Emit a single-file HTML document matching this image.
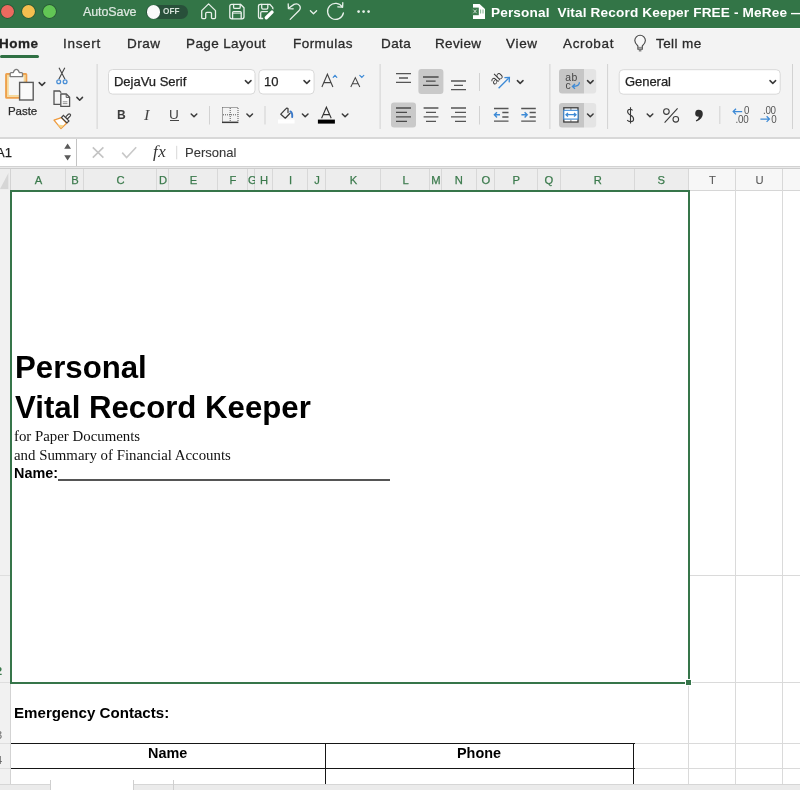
<!DOCTYPE html>
<html><head><meta charset="utf-8">
<style>
*{box-sizing:border-box;margin:0;padding:0}
html,body{width:800px;height:790px;overflow:hidden;background:#fff;font-family:"Liberation Sans",sans-serif;position:relative}
.a{position:absolute}
.t{position:absolute;white-space:pre;line-height:1;will-change:transform}
#title{left:0;top:0;width:800px;height:28px;background:#337547}
#tabs{left:0;top:28px;width:800px;height:109px;background:#f3f3f3;border-top:1px solid #fafafa}
.tab{will-change:transform;position:absolute;top:36.7px;font-size:13.5px;color:#2b2b2b;white-space:pre;line-height:1;-webkit-text-stroke:0.3px #2b2b2b}
.dd{position:absolute;background:#fff;border:1px solid #d6d6d6;border-radius:4px}
.chev{position:absolute;width:6px;height:6px;border-right:1.6px solid #444;border-bottom:1.6px solid #444;transform:rotate(45deg)}
.vdiv{position:absolute;width:1px;background:#d4d4d4}
.colh{will-change:transform;position:absolute;top:170px;height:21px;font-size:11.2px;color:#3b7a4c;text-align:center;line-height:21px;-webkit-text-stroke:0.25px;overflow:hidden}
</style></head><body>
<!-- TITLE BAR -->
<div class="a" id="title"></div>
<div class="a" style="left:0.9px;top:4.9px;width:13px;height:13px;border-radius:50%;background:#ec6a5f;box-shadow:0 0 0 0.7px rgba(20,40,25,0.45)"></div>
<div class="a" style="left:21.8px;top:4.9px;width:13px;height:13px;border-radius:50%;background:#f4bf4f;box-shadow:0 0 0 0.7px rgba(20,40,25,0.45)"></div>
<div class="a" style="left:42.7px;top:4.9px;width:13px;height:13px;border-radius:50%;background:#62c655;box-shadow:0 0 0 0.7px rgba(20,40,25,0.45)"></div>
<div class="t" style="left:83px;top:5.5px;font-size:12.5px;color:#dfe9e2;letter-spacing:-0.1px;-webkit-text-stroke:0.2px #dfe9e2">AutoSave</div>
<div class="a" style="left:146px;top:4.5px;width:42px;height:14.5px;border-radius:8px;background:#28503a"></div>
<div class="a" style="left:146.5px;top:5px;width:13.5px;height:13.5px;border-radius:50%;background:#fafafa"></div>
<div class="t" style="left:163px;top:8.3px;font-size:8.2px;font-weight:bold;color:#d6e2da;letter-spacing:0.1px">OFF</div>

<div class="t" style="left:491px;top:6px;font-size:13.6px;font-weight:bold;color:#fff;letter-spacing:0.15px">Personal  Vital Record Keeper FREE - MeRee —</div>

<!-- TABS / RIBBON -->
<div class="a" id="tabs"></div>
<div class="tab" style="left:-1px;font-weight:bold;color:#222;letter-spacing:0.5px">Home</div>
<div class="a" style="left:0;top:54.7px;width:38.7px;height:3px;border-radius:2px;background:#2f7043"></div>
<div class="tab" style="left:62.5px;letter-spacing:0.7px">Insert</div>
<div class="tab" style="left:127px;letter-spacing:0.5px">Draw</div>
<div class="tab" style="left:186.2px;letter-spacing:0.38px">Page Layout</div>
<div class="tab" style="left:293.2px;letter-spacing:0.45px">Formulas</div>
<div class="tab" style="left:380.5px;letter-spacing:0.4px">Data</div>
<div class="tab" style="left:434.5px;letter-spacing:0.35px">Review</div>
<div class="tab" style="left:506px;letter-spacing:0.7px">View</div>
<div class="tab" style="left:563.2px;letter-spacing:0.65px">Acrobat</div>
<div class="tab" style="left:656px;letter-spacing:0.4px">Tell me</div>

<!-- ribbon bottom line -->
<div class="a" style="left:0;top:136.8px;width:800px;height:2.2px;background:#d8d8d8"></div>

<!-- FORMULA BAR -->
<div class="a" style="left:0;top:139px;width:800px;height:26.5px;background:#fff"></div>
<div class="a" style="left:75.6px;top:139px;width:1.7px;height:26.5px;background:#c4c4c4"></div>
<div class="t" style="left:-4.5px;top:145.6px;font-size:13px;color:#222;-webkit-text-stroke:0.25px #222">A1</div>
<div class="t" style="left:184.6px;top:145.8px;font-size:13px;color:#363636;letter-spacing:0px;-webkit-text-stroke:0.1px #363636">Personal</div>
<div class="a" style="left:0;top:165.5px;width:800px;height:1.5px;background:#d2d2d2"></div>
<div class="a" style="left:0;top:167px;width:800px;height:0.9px;background:#eaeaea"></div>
<div class="a" style="left:0;top:167.9px;width:800px;height:1.2px;background:#cdcdcd"></div>

<svg class="a" style="left:0;top:0;will-change:transform" width="800" height="790" viewBox="0 0 800 790">
<g fill="none" stroke="#e9f1eb" stroke-width="1.3" stroke-linejoin="round" stroke-linecap="round">
 <!-- home -->
 <path d="M201.7,10.6 L208.6,3.9 L215.5,10.6 L215.5,17.6 Q215.5,18.6 214.5,18.6 L212.3,18.6 Q211.5,18.6 211.5,17.8 L211.5,13.6 Q211.5,12.4 210.3,12.4 L206.9,12.4 Q205.7,12.4 205.7,13.6 L205.7,17.8 Q205.7,18.6 204.9,18.6 L202.7,18.6 Q201.7,18.6 201.7,17.6 Z"/>
 <!-- save -->
 <path d="M231.8,4.3 L240.5,4.3 L244,7.8 L244,16.8 Q244,18.8 242,18.8 L231.8,18.8 Q229.8,18.8 229.8,16.8 L229.8,6.3 Q229.8,4.3 231.8,4.3 Z"/>
 <path d="M233.6,4.5 L233.6,7.2 Q233.6,8.4 234.8,8.4 L239,8.4 Q240.2,8.4 240.2,7.2 L240.2,4.5"/>
 <path d="M232.6,18.6 L232.6,12.6 Q232.6,11.6 233.6,11.6 L240.2,11.6 Q241.2,11.6 241.2,12.6 L241.2,18.6"/>
 <path d="M232.8,13.2 L241,13.2" stroke-width="0.9"/>
 <!-- save as -->
 <path d="M263,18.5 L260.4,18.5 Q258.5,18.5 258.5,16.6 L258.5,6.2 Q258.5,4.3 260.4,4.3 L269.8,4.3 L272.8,7.6 L272.8,9.4"/>
 <path d="M261.7,4.5 L261.7,7.8 Q261.7,9.1 263,9.1 L266.5,9.1 Q267.8,9.1 267.8,7.8 L267.8,4.5"/>
 <path d="M260.7,18.3 L260.7,12.9 Q260.7,11.7 261.9,11.7 L267.4,11.7"/>
 <!-- undo -->
 <path d="M290.2,19.4 L298.6,11 Q301.4,8.2 299.6,5.6 Q297.4,3 294,4.4 L288.6,8.2"/>
 <path d="M288.2,3.8 L288.4,8.6 L293.2,8.8"/>
 <path d="M310.4,10.8 L313.5,13.8 L316.6,10.8"/>
 <!-- redo -->
 <path d="M342.4,7.2 A8,8 0 1 0 343.4,13"/>
 <path d="M337.8,6.8 L342.6,7.2 L342.8,2.6"/>
</g>
<g fill="#e9f1eb"><circle cx="358.6" cy="11.6" r="1.35"/><circle cx="363.6" cy="11.6" r="1.35"/><circle cx="368.6" cy="11.6" r="1.35"/></g>
<!-- save-as pencil -->
<path d="M266.3,17.8 L272,12.1" stroke="#337547" stroke-width="6" stroke-linecap="round"/>
<path d="M266.3,17.8 L272,12.1" stroke="#fff" stroke-width="3.4" stroke-linecap="round"/>
<!-- file icon -->
<path d="M473,3.9 L479.6,3.9 L485,8.9 L485,18.9 L473,18.9 Z" fill="#fff"/>
<rect x="471.2" y="7.6" width="7.6" height="7.6" fill="#3c7b4d"/>
<path d="M473.4,9.6 L476.6,13.2 M476.6,9.6 L473.4,13.2" stroke="#cfe0d4" stroke-width="1"/>
<path d="M480.6,9.4 L480.6,13.6 M483,9.4 L483,13.6" stroke="#8dbb98" stroke-width="1.1"/>
<!-- ======= RIBBON ======= -->
<!-- Paste clipboard -->
<rect x="6.1" y="73.9" width="20.2" height="23.8" rx="0.5" fill="#f6f6f6" stroke="#eea04c" stroke-width="2"/>
<rect x="7.9" y="75.7" width="16.6" height="20.2" fill="none" stroke="#f6d998" stroke-width="1.7"/>
<path d="M10.2,76.6 L10.2,73.6 Q10.2,72.6 11.2,72.6 L13.3,72.6 Q14.2,69.4 16.3,69.4 Q18.4,69.4 19.3,72.6 L21.5,72.6 Q22.5,72.6 22.5,73.6 L22.5,76.6 Z" fill="#fff" stroke="#7b7b7b" stroke-width="1.3" stroke-linejoin="round"/>
<rect x="19.6" y="82.4" width="13.6" height="17.6" fill="#fafafa" stroke="#5a5a5a" stroke-width="1.4"/>
<!-- dropdown boxes -->
<rect x="108.5" y="69.5" width="146.5" height="24.6" rx="4" fill="#fff" stroke="#d8d8d8" stroke-width="1"/>
<rect x="258.9" y="69.8" width="55.2" height="24.2" rx="4" fill="#fff" stroke="#d8d8d8" stroke-width="1"/>
<rect x="619.2" y="69.7" width="161" height="24.5" rx="4" fill="#fff" stroke="#d8d8d8" stroke-width="1"/>
<path d="M562,69 L584,69 L584,93.5 L562,93.5 Q559,93.5 559,90.5 L559,72 Q559,69 562,69 Z" fill="#c6c6c6"/>
<path d="M584,69 L593.2,69 Q596.2,69 596.2,72 L596.2,90.5 Q596.2,93.5 593.2,93.5 L584,93.5 Z" fill="#e4e4e4"/>
<path d="M562,103 L584,103 L584,127.5 L562,127.5 Q559,127.5 559,124.5 L559,106 Q559,103 562,103 Z" fill="#c6c6c6"/>
<path d="M584,103 L593.2,103 Q596.2,103 596.2,106 L596.2,124.5 Q596.2,127.5 593.2,127.5 L584,127.5 Z" fill="#e4e4e4"/>
<!-- chevrons -->
<g fill="none" stroke="#3a3a3a" stroke-width="1.5" stroke-linecap="round" stroke-linejoin="round">
 <path d="M39.2,82.6 L42,85.4 L44.8,82.6"/>
 <path d="M76.9,97.4 L79.7,100.2 L82.5,97.4"/>
 <path d="M245.4,80.6 L248.2,83.4 L251,80.6"/>
 <path d="M304,80.6 L306.8,83.4 L309.6,80.6"/>
 <path d="M191.2,114 L194,116.8 L196.8,114"/>
 <path d="M246.9,114 L249.7,116.8 L252.5,114"/>
 <path d="M302.4,114 L305.2,116.8 L308,114"/>
 <path d="M342.3,114 L345.1,116.8 L347.9,114"/>
 <path d="M517.4,80.6 L520.2,83.4 L523,80.6"/>
 <path d="M587.5,80.6 L590.3,83.4 L593.1,80.6"/>
 <path d="M587.5,114 L590.3,116.8 L593.1,114"/>
 <path d="M770,80.6 L772.8,83.4 L775.6,80.6"/>
 <path d="M647.2,114 L650,116.8 L652.8,114"/>
</g>
<!-- scissors -->
<path d="M59,67.8 L65,79.2 M64.8,67.8 L58.8,79.2" stroke="#454545" stroke-width="1.1" fill="none"/>
<circle cx="58.7" cy="81.7" r="1.9" fill="none" stroke="#4a8fd6" stroke-width="1.3"/>
<circle cx="65.1" cy="81.7" r="1.9" fill="none" stroke="#4a8fd6" stroke-width="1.3"/>
<!-- copy -->
<path d="M60.6,104.4 L54,104.4 L54,91 L59.6,91 L61.2,92.6" fill="none" stroke="#555" stroke-width="1.3"/>
<path d="M60.8,94 L66.4,94 L69.6,97.2 L69.6,106.4 L60.8,106.4 Z" fill="#fafafa" stroke="#555" stroke-width="1.3" stroke-linejoin="round"/>
<path d="M66.2,94.2 L66.2,97.4 L69.4,97.4" fill="none" stroke="#555" stroke-width="1"/>
<path d="M62.8,101.8 L67.4,101.8 M62.8,103.6 L67.4,103.6" stroke="#888" stroke-width="0.9"/>
<!-- format painter -->
<path d="M54,120.2 L61.4,117.6 L66.6,123.2 L61,128.6 Z" fill="#fff" stroke="#ee9a3e" stroke-width="1.3" stroke-linejoin="round"/>
<path d="M57.6,124.4 L63.4,125.2 L61,128 Z" fill="#f5d98a"/>
<g transform="translate(65.2,119.2) rotate(-45)"><rect x="1.4" y="-1.3" width="5.6" height="2.6" rx="1.3" fill="#fff" stroke="#444" stroke-width="1.2"/><rect x="-1.4" y="-3.9" width="2.8" height="7.8" fill="#fff" stroke="#444" stroke-width="1.2"/></g>
<!-- dividers -->
<g fill="#d2d2d2">
 <rect x="96.6" y="64" width="1" height="65"/>
 <rect x="379.6" y="64" width="1" height="65"/>
 <rect x="549.4" y="64" width="1" height="65"/>
 <rect x="607.1" y="64" width="1" height="65"/>
 <rect x="792" y="64" width="1" height="65"/>
 <rect x="209" y="106" width="1" height="18.5"/>
 <rect x="264.5" y="106" width="1" height="18.5"/>
 <rect x="479" y="73" width="1" height="18"/>
 <rect x="479" y="106" width="1" height="18.5"/>
 <rect x="719.3" y="106" width="1" height="18"/>
</g>
<!-- grow/shrink carets -->
<path d="M321.9,87 L327.4,74.2 L332.9,87 M323.8,82.6 L331,82.6" fill="none" stroke="#444" stroke-width="1.1"/>
<path d="M350.8,87 L355.3,77.6 L359.8,87 M352.3,83.8 L358.3,83.8" fill="none" stroke="#444" stroke-width="1.05"/>
<path d="M333.2,77.4 L335,75.4 L336.8,77.4" fill="none" stroke="#3d8ad6" stroke-width="1.2" stroke-linecap="round"/>
<path d="M359.8,75.4 L361.8,77.4 L363.8,75.4" fill="none" stroke="#3d8ad6" stroke-width="1.2" stroke-linecap="round"/>
<!-- borders icon -->
<g fill="none" stroke="#555" stroke-width="1" stroke-dasharray="1,1">
 <path d="M222.5,107.5 L238,107.5 L238,122 M222.5,107.5 L222.5,122"/>
 <path d="M230.2,108 L230.2,122 M223,114.8 L237.5,114.8"/>
</g>
<rect x="222" y="121.6" width="16.4" height="1.5" fill="#3a3a3a"/>
<!-- fill bucket -->
<path d="M290,113.3 L285.3,118.2 L280.8,114.2 L285.8,108.8 Q287,107.4 288,108.6 L288,112.6" fill="none" stroke="#3b3b3b" stroke-width="1.25" stroke-linejoin="round" stroke-linecap="round"/>
<path d="M290.4,111.4 Q292.6,112.6 292.2,117" fill="none" stroke="#3a78c8" stroke-width="1.9" stroke-linecap="round"/>
<rect x="278" y="119.5" width="16.6" height="4" fill="#fff"/>
<!-- font colour -->
<path d="M321.6,118.2 L326.4,107.2 L331.2,118.2 M323.2,114.6 L329.6,114.6" fill="none" stroke="#333" stroke-width="1.1"/>
<rect x="317.9" y="119.6" width="17" height="4" fill="#000"/>
<!-- align top -->
<g stroke="#555" stroke-width="1.3">
 <path d="M396,73.6 L411,73.6 M399,78 L408,78 M396,82.4 L411,82.4"/>
</g>
<rect x="418.4" y="69" width="25" height="25" rx="3" fill="#c9c9c9"/>
<g stroke="#4a4a4a" stroke-width="1.3">
 <path d="M423,77 L438.6,77 M426,81.2 L435.6,81.2 M423,85.4 L438.6,85.4"/>
</g>
<g stroke="#555" stroke-width="1.3">
 <path d="M451,81 L466,81 M454,85.3 L463,85.3 M451,89.6 L466,89.6"/>
</g>
<rect x="391" y="102.6" width="25" height="25" rx="3" fill="#c9c9c9"/>
<g stroke="#4a4a4a" stroke-width="1.3">
 <path d="M396,108 L411,108 M396,112.4 L407,112.4 M396,116.9 L411,116.9 M396,121.3 L407,121.3"/>
</g>
<g stroke="#555" stroke-width="1.3">
 <path d="M423.6,108 L438.4,108 M426,112.4 L436,112.4 M423.6,116.9 L438.4,116.9 M426,121.3 L436,121.3"/>
 <path d="M451,108 L466,108 M455,112.4 L466,112.4 M451,116.9 L466,116.9 M455,121.3 L466,121.3"/>
</g>
<!-- orientation -->
<text x="0" y="0" transform="translate(494.6,85.6) rotate(-45)" font-family="Liberation Sans" font-size="12" fill="#3a3a3a">ab</text>
<path d="M498.6,88.2 L508.6,78.2" stroke="#3d8ad6" stroke-width="1.3"/>
<path d="M504.4,77.6 L509.4,77.4 L509.2,82.4" fill="none" stroke="#3d8ad6" stroke-width="1.3"/>
<!-- indents -->
<g stroke="#555" stroke-width="1.3">
 <path d="M494,108.5 L508.5,108.5 M502.3,112.5 L508.5,112.5 M502.3,117 L508.5,117 M494,121.1 L508.5,121.1"/>
 <path d="M521.2,108.5 L535.8,108.5 M529.6,112.5 L535.8,112.5 M529.6,117 L535.8,117 M521.2,121.1 L535.8,121.1"/>
</g>
<g stroke="#3d8ad6" stroke-width="1.4" fill="none">
 <path d="M494.6,114.8 L500,114.8 M497,112.2 L494.4,114.8 L497,117.4"/>
 <path d="M521.4,114.8 L527,114.8 M524.6,112.2 L527.2,114.8 L524.6,117.4"/>
</g>
<!-- wrap/merge buttons -->
<text x="565.2" y="81.4" font-family="Liberation Sans" font-size="10.4" fill="#444" letter-spacing="0.6">ab</text>
<text x="565.4" y="88.9" font-family="Liberation Sans" font-size="10.4" fill="#444">c</text>
<path d="M579.4,82.2 Q579.6,86.4 572.8,86.4 M575,84 L572.4,86.4 L575,88.8" fill="none" stroke="#3d8ad6" stroke-width="1.3"/>
<rect x="563.8" y="107.8" width="14.2" height="14.2" fill="#fff" stroke="#3c3c3c" stroke-width="1.3"/>
<path d="M570.9,107.8 L570.9,110.4 M570.9,119.6 L570.9,122" stroke="#555" stroke-width="0.8"/>
<rect x="563.8" y="110.3" width="14.2" height="8.8" fill="#fff" stroke="#3d8ad6" stroke-width="1.1"/>
<path d="M566,114.7 L576,114.7 M568,112.9 L566,114.7 L568,116.5 M574,112.9 L576,114.7 L574,116.5" fill="none" stroke="#3d8ad6" stroke-width="1.3"/>
<!-- number group -->
<path d="M632.6,110.4 Q631.4,109.2 630.2,109.2 Q627.6,109.2 627.6,111.6 Q627.6,113.8 630.6,115.2 Q633.6,116.6 633.6,119.2 Q633.6,121.6 630.6,121.6 Q628.4,121.6 627.2,120.2 M630.5,107.2 L630.5,123.6" fill="none" stroke="#3a3a3a" stroke-width="1.1"/>
<g fill="none" stroke="#3a3a3a" stroke-width="1.1">
 <circle cx="666.4" cy="111.6" r="2.8"/>
 <circle cx="675.8" cy="119.3" r="2.8"/>
 <path d="M664.6,122.6 L677.6,108.4"/>
</g>
<path d="M698.4,109.8 Q702.8,109.8 702.8,114 Q702.8,118.6 696.4,121.6 L695.8,120.6 Q698.6,119 699,116.8 Q695.2,117 695.2,113.6 Q695.2,109.8 698.4,109.8 Z" fill="#2e2e2e"/>
<text x="744" y="114.4" font-family="Liberation Sans" font-size="9.8" fill="#555" transform="translate(0,-11.4) scale(1,1.1)">0</text>
<text x="735.6" y="122.9" font-family="Liberation Sans" font-size="9.8" fill="#555" transform="translate(0,-12.29) scale(1,1.1)" letter-spacing="-0.3">.00</text>
<path d="M733.2,111.6 L742.2,111.6 M736,108.8 L733.2,111.6 L736,114.4" fill="none" stroke="#3d8ad6" stroke-width="1.3"/>
<text x="763" y="114.4" font-family="Liberation Sans" font-size="9.8" fill="#555" transform="translate(0,-11.44) scale(1,1.1)" letter-spacing="-0.3">.00</text>
<text x="771.2" y="122.9" font-family="Liberation Sans" font-size="9.8" fill="#555" transform="translate(0,-12.29) scale(1,1.1)">0</text>
<path d="M760.4,119.1 L769.4,119.1 M766.6,116.3 L769.4,119.1 L766.6,121.9" fill="none" stroke="#3d8ad6" stroke-width="1.3"/>
<!-- bulb -->
<path d="M637.9,46 Q634.8,43.4 634.8,40.6 A5.3,5.3 0 0 1 645.4,40.6 Q645.4,43.4 642.3,46 L642.3,49.2 L637.9,49.2 Z" fill="#f7f7f7" stroke="#4a4a4a" stroke-width="1.15" stroke-linejoin="round"/>
<path d="M638,47.4 L642.2,47.4 M638,49 L642.2,49" stroke="#777" stroke-width="0.9"/>
<path d="M638.8,50.8 L641.4,50.8" stroke="#666" stroke-width="1.2"/>
<!-- formula bar icons -->
<path d="M64.2,148.8 L67.6,143.6 L71,148.8 Z M64.2,155.2 L71,155.2 L67.6,160.6 Z" fill="#5a5a5a"/>
<path d="M92.8,147.4 L103.4,157.6 M103.4,147.4 L92.8,157.6" stroke="#c4c4c4" stroke-width="1.6"/>
<path d="M122.2,152.6 L126.6,157.6 L136.2,147.2" fill="none" stroke="#c8c8c8" stroke-width="1.6"/>
<rect x="176.2" y="145.8" width="1" height="13.5" fill="#d8d8d8"/>
</svg>

<div class="t" style="left:8.3px;top:105.5px;font-size:11.5px;color:#2b2b2b;letter-spacing:-0.05px;-webkit-text-stroke:0.25px #2b2b2b">Paste</div>
<div class="t" style="left:113.9px;top:74.6px;font-size:13px;color:#222;letter-spacing:-0.02px;-webkit-text-stroke:0.25px #222">DejaVu Serif</div>
<div class="t" style="left:263.5px;top:74.6px;font-size:13px;color:#222;-webkit-text-stroke:0.25px #222">10</div>
<div class="t" style="left:116.8px;top:107.6px;font-size:13.6px;font-weight:bold;color:#3a3a3a;transform:scaleX(0.88);transform-origin:0 0">B</div>
<div class="t" style="left:143.8px;top:107.8px;font-size:14.2px;font-style:italic;font-family:'Liberation Serif',serif;color:#444;transform:scaleX(1.15);transform-origin:0 0">I</div>
<div class="t" style="left:169.4px;top:107.6px;font-size:13.6px;color:#444">U</div>
<div class="a" style="left:170.2px;top:120.4px;width:8.8px;height:1.1px;background:#444"></div>
<div class="t" style="left:625px;top:74.6px;font-size:13px;color:#222;letter-spacing:-0.05px;-webkit-text-stroke:0.25px #222">General</div>
<div class="t" style="left:153px;top:143.2px;font-size:17px;font-style:italic;font-family:'Liberation Serif',serif;color:#333;letter-spacing:0.6px">fx</div>

<!-- HEADERS -->
<div class="a" style="left:0;top:169px;width:689px;height:21px;background:#ededed"></div>
<div class="a" style="left:689px;top:169px;width:111px;height:21.5px;background:#f7f7f7"></div>
<div class="a" style="left:0;top:189.8px;width:800px;height:1px;background:#d6d6d6"></div>
<svg class="a" style="left:0;top:169px" width="11" height="21"><path d="M0,20 L8.4,20 L8.4,4 Z" fill="#d6d6d6"/></svg>
<div class="a" style="left:65.00px;top:169px;width:1px;height:21px;background:#d8d8d8"></div>
<div class="a" style="left:83.00px;top:169px;width:1px;height:21px;background:#d8d8d8"></div>
<div class="a" style="left:156.00px;top:169px;width:1px;height:21px;background:#d8d8d8"></div>
<div class="a" style="left:168.25px;top:169px;width:1px;height:21px;background:#d8d8d8"></div>
<div class="a" style="left:217.00px;top:169px;width:1px;height:21px;background:#d8d8d8"></div>
<div class="a" style="left:247.00px;top:169px;width:1px;height:21px;background:#d8d8d8"></div>
<div class="a" style="left:254.00px;top:169px;width:1px;height:21px;background:#d8d8d8"></div>
<div class="a" style="left:272.00px;top:169px;width:1px;height:21px;background:#d8d8d8"></div>
<div class="a" style="left:307.00px;top:169px;width:1px;height:21px;background:#d8d8d8"></div>
<div class="a" style="left:325.00px;top:169px;width:1px;height:21px;background:#d8d8d8"></div>
<div class="a" style="left:380.00px;top:169px;width:1px;height:21px;background:#d8d8d8"></div>
<div class="a" style="left:429.00px;top:169px;width:1px;height:21px;background:#d8d8d8"></div>
<div class="a" style="left:440.75px;top:169px;width:1px;height:21px;background:#d8d8d8"></div>
<div class="a" style="left:476.25px;top:169px;width:1px;height:21px;background:#d8d8d8"></div>
<div class="a" style="left:494.00px;top:169px;width:1px;height:21px;background:#d8d8d8"></div>
<div class="a" style="left:536.50px;top:169px;width:1px;height:21px;background:#d8d8d8"></div>
<div class="a" style="left:560.00px;top:169px;width:1px;height:21px;background:#d8d8d8"></div>
<div class="a" style="left:633.50px;top:169px;width:1px;height:21px;background:#d8d8d8"></div>
<div class="a" style="left:688.20px;top:169px;width:1px;height:21px;background:#d8d8d8"></div>
<div class="a" style="left:735.10px;top:169px;width:1px;height:21px;background:#d8d8d8"></div>
<div class="a" style="left:782.10px;top:169px;width:1px;height:21px;background:#d8d8d8"></div>
<div class="colh" style="left:10.50px;width:55.00px;color:#3b7a4c">A</div>
<div class="colh" style="left:65.50px;width:18.00px;color:#3b7a4c">B</div>
<div class="colh" style="left:83.50px;width:73.00px;color:#3b7a4c">C</div>
<div class="colh" style="left:156.50px;width:12.25px;color:#3b7a4c">D</div>
<div class="colh" style="left:168.75px;width:48.75px;color:#3b7a4c">E</div>
<div class="colh" style="left:217.50px;width:30.00px;color:#3b7a4c">F</div>
<div class="colh" style="left:247.50px;width:7.00px;color:#3b7a4c">G</div>
<div class="colh" style="left:254.50px;width:18.00px;color:#3b7a4c">H</div>
<div class="colh" style="left:272.50px;width:35.00px;color:#3b7a4c">I</div>
<div class="colh" style="left:307.50px;width:18.00px;color:#3b7a4c">J</div>
<div class="colh" style="left:325.50px;width:55.00px;color:#3b7a4c">K</div>
<div class="colh" style="left:380.50px;width:49.00px;color:#3b7a4c">L</div>
<div class="colh" style="left:429.50px;width:11.75px;color:#3b7a4c">M</div>
<div class="colh" style="left:441.25px;width:35.50px;color:#3b7a4c">N</div>
<div class="colh" style="left:476.75px;width:17.75px;color:#3b7a4c">O</div>
<div class="colh" style="left:494.50px;width:42.50px;color:#3b7a4c">P</div>
<div class="colh" style="left:537.00px;width:23.50px;color:#3b7a4c">Q</div>
<div class="colh" style="left:560.50px;width:73.50px;color:#3b7a4c">R</div>
<div class="colh" style="left:634.00px;width:54.70px;color:#3b7a4c">S</div>
<div class="colh" style="left:688.70px;width:46.90px;color:#5a5a5a;-webkit-text-stroke:0.1px">T</div>
<div class="colh" style="left:735.60px;width:47.00px;color:#5a5a5a;-webkit-text-stroke:0.1px">U</div>
<div class="a" style="left:0;top:190px;width:10.5px;height:594px;background:#f1f1f1"></div>
<div class="a" style="left:10px;top:169px;width:1px;height:615px;background:#d3d3d3"></div>
<div class="a" style="left:0;top:575.0px;width:10px;height:1px;background:#dedede"></div>
<div class="a" style="left:0;top:682.0px;width:10px;height:1px;background:#dedede"></div>
<div class="a" style="left:0;top:743.0px;width:10px;height:1px;background:#dedede"></div>
<div class="a" style="left:0;top:768.0px;width:10px;height:1px;background:#dedede"></div>
<div class="t" style="left:-5.8px;top:562.5px;font-size:11px;font-weight:bold;color:#3b7a4c">1</div>
<div class="t" style="left:-4.2px;top:665.5px;font-size:11px;font-weight:bold;color:#3b7a4c">2</div>
<div class="t" style="left:-3.8px;top:729.5px;font-size:11px;color:#666">3</div>
<div class="t" style="left:-4px;top:755px;font-size:11px;color:#666">4</div>
<div class="a" style="left:735.1px;top:190px;width:1px;height:594px;background:#dadada"></div>
<div class="a" style="left:782.1px;top:190px;width:1px;height:594px;background:#dadada"></div>
<div class="a" style="left:688.2px;top:682px;width:1px;height:102px;background:#dadada"></div>
<div class="a" style="left:689px;top:575.0px;width:111px;height:1px;background:#dadada"></div>
<div class="a" style="left:689px;top:682.0px;width:111px;height:1px;background:#dadada"></div>
<div class="a" style="left:634px;top:743.0px;width:166px;height:1px;background:#dadada"></div>
<div class="a" style="left:634px;top:768.0px;width:166px;height:1px;background:#dadada"></div>
<div class="a" style="left:9.6px;top:190px;width:680.2px;height:493.6px;border:2.2px solid #36754a"></div>
<div class="a" style="left:684.9px;top:678.8px;width:7px;height:7px;background:#36754a;border:1px solid #fff"></div>
<div class="a" style="left:10.5px;top:742.5px;width:624px;height:1.6px;background:#161616"></div>
<div class="a" style="left:10.5px;top:767.5px;width:624px;height:1.6px;background:#161616"></div>
<div class="a" style="left:324.9px;top:742.5px;width:1.6px;height:42px;background:#161616"></div>
<div class="a" style="left:632.9px;top:742.5px;width:1.6px;height:42px;background:#161616"></div>
<div class="t" style="left:148px;top:745.5px;font-size:14.4px;font-weight:bold;color:#000">Name</div>
<div class="t" style="left:456.5px;top:745.5px;font-size:14.4px;font-weight:bold;color:#000">Phone</div>
<!-- CONTENT -->
<div class="t" style="left:14.5px;top:352px;font-size:31.2px;font-weight:bold;color:#000">Personal</div>
<div class="t" style="left:14.5px;top:391.5px;font-size:31.2px;font-weight:bold;color:#000">Vital Record Keeper</div>
<div class="t" style="left:14px;top:429px;font-size:14.85px;font-family:'Liberation Serif',serif;color:#111">for Paper Documents</div>
<div class="t" style="left:14px;top:447.9px;font-size:14.85px;font-family:'Liberation Serif',serif;color:#111">and Summary of Financial Accounts</div>
<div class="t" style="left:13.5px;top:466px;font-size:14.4px;font-weight:bold;color:#000">Name:</div>
<div class="a" style="left:58px;top:479px;width:332px;height:1.5px;background:#555"></div>

<div class="t" style="left:14px;top:704.5px;font-size:15.1px;font-weight:bold;color:#000">Emergency Contacts:</div>

<!-- BOTTOM BAR -->
<div class="a" style="left:0;top:783.6px;width:800px;height:6.4px;background:#ebebeb;border-top:1px solid #d6d6d6"></div>
<div class="a" style="left:50.6px;top:780px;width:83px;height:10px;background:#fff"></div>
<div class="a" style="left:50.1px;top:780px;width:1px;height:10px;background:#cfcfcf"></div>
<div class="a" style="left:133.1px;top:780px;width:1px;height:10px;background:#cfcfcf"></div>
<div class="a" style="left:172.9px;top:780px;width:1px;height:10px;background:#cfcfcf"></div>
</body></html>
